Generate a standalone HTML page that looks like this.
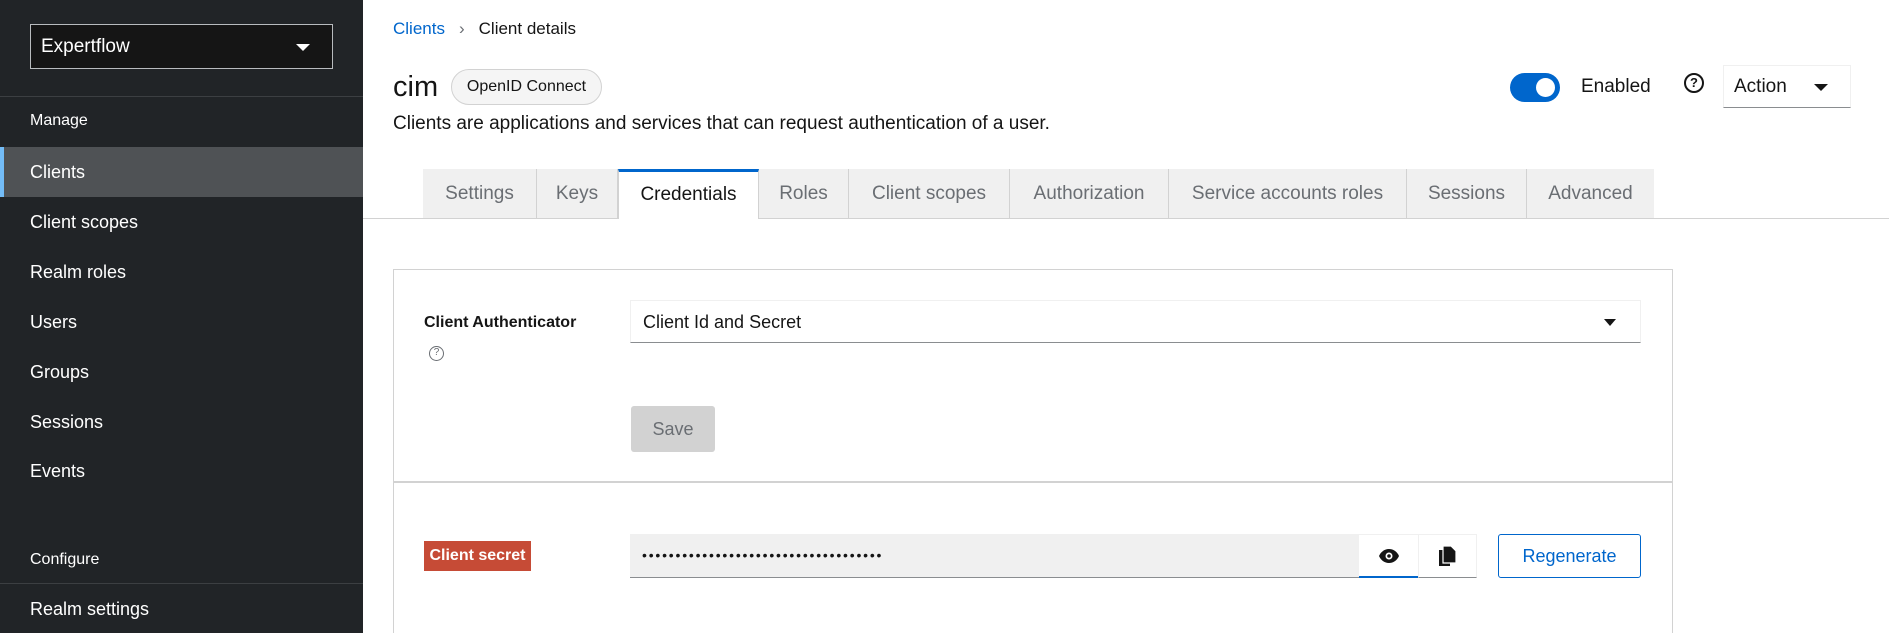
<!DOCTYPE html>
<html style="overflow:hidden"><head><meta charset="utf-8"><style>
*{box-sizing:border-box;margin:0;padding:0}
html,body{width:1889px;height:633px;overflow:hidden}
body{font-family:"Liberation Sans",sans-serif;background:#fff;position:relative;color:#151515}
.a{position:absolute}
#sb{left:0;top:0;width:363px;height:633px;background:#212427}
.nav{position:absolute;left:30px;color:#fff;font-size:18px}
.tab{position:absolute;top:169px;height:49px;background:#f0f0f0;border-right:1px solid #d2d2d2;color:#6a6e73;font-size:19px;text-align:center;line-height:49px}
</style></head><body>
<div id="sb">
 <div class="a" style="left:30px;top:24px;width:303px;height:45px;border:1px solid #b8bbbe;background:#151515;color:#fff;font-size:19px;line-height:43px;padding-left:10px">Expertflow<span class="a" style="right:22px;top:19px;border-left:7px solid transparent;border-right:7px solid transparent;border-top:7px solid #fff"></span></div>
 <div class="a" style="left:0;top:96px;width:363px;height:1px;background:#3c3f42"></div>
 <div class="nav" style="top:112px;font-size:16px">Manage</div>
 <div class="a" style="left:0;top:147px;width:363px;height:50px;background:#4f5255"></div>
 <div class="a" style="left:0;top:147px;width:4px;height:50px;background:#73bcf7"></div>
 <div class="nav" style="top:162px">Clients</div>
 <div class="nav" style="top:212px">Client scopes</div>
 <div class="nav" style="top:262px">Realm roles</div>
 <div class="nav" style="top:312px">Users</div>
 <div class="nav" style="top:362px">Groups</div>
 <div class="nav" style="top:412px">Sessions</div>
 <div class="nav" style="top:461px">Events</div>
 <div class="nav" style="top:551px;font-size:16px">Configure</div>
 <div class="a" style="left:0;top:583px;width:363px;height:1px;background:#3c3f42"></div>
 <div class="nav" style="top:599px">Realm settings</div>
</div>

<div class="a" style="left:393px;top:19px;font-size:17px"><span style="color:#06c">Clients</span><span style="color:#6a6e73;margin:0 14px">›</span>Client details</div>
<div class="a" style="left:393px;top:71px;font-size:29px">cim</div>
<div class="a" style="left:451px;top:69px;width:151px;height:36px;border:1px solid #d2d2d2;border-radius:18px;background:#f5f5f5;font-size:16px;text-align:center;line-height:34px">OpenID Connect</div>
<div class="a" style="left:393px;top:113px;font-size:19px">Clients are applications and services that can request authentication of a user.</div>

<div class="a" style="left:1510px;top:73px;width:50px;height:29px;border-radius:15px;background:#06c"><div class="a" style="right:5px;top:5px;width:19px;height:19px;border-radius:50%;background:#fff"></div></div>
<div class="a" style="left:1581px;top:76px;font-size:19px">Enabled</div>
<div class="a" style="left:1684px;top:73px;width:20px;height:20px;border:2.5px solid #151515;border-radius:50%;font-size:13px;font-weight:bold;text-align:center;line-height:15px">?</div>
<div class="a" style="left:1723px;top:65px;width:128px;height:43px;border:1px solid #f0f0f0;border-bottom:1px solid #8a8d90;font-size:19px;line-height:41px;padding-left:10px">Action<span class="a" style="right:22px;top:18px;border-left:7px solid transparent;border-right:7px solid transparent;border-top:7px solid #151515"></span></div>

<div class="a" style="left:363px;top:218px;width:1526px;height:1px;background:#d2d2d2"></div>
<div class="tab" style="left:423px;width:114px">Settings</div>
<div class="tab" style="left:537px;width:81px">Keys</div>
<div class="tab" style="left:618px;width:141px;background:#fff;color:#151515;border-top:3px solid #06c;height:50px;line-height:45px;border-left:1px solid #d2d2d2">Credentials</div>
<div class="tab" style="left:759px;width:90px">Roles</div>
<div class="tab" style="left:849px;width:161px">Client scopes</div>
<div class="tab" style="left:1010px;width:159px">Authorization</div>
<div class="tab" style="left:1169px;width:238px">Service accounts roles</div>
<div class="tab" style="left:1407px;width:120px">Sessions</div>
<div class="tab" style="left:1527px;width:127px;border-right:none">Advanced</div>

<div class="a" style="left:393px;top:269px;width:1280px;height:380px;border:1px solid #d2d2d2"></div>
<div class="a" style="left:394px;top:481px;width:1278px;height:2px;background:#d2d2d2"></div>
<div class="a" style="left:424px;top:314px;font-size:16px;font-weight:bold">Client Authenticator</div>
<div class="a" style="left:429px;top:346px;width:15px;height:15px;border:1.5px solid #6a6e73;border-radius:50%;font-size:10px;color:#6a6e73;text-align:center;line-height:12px">?</div>
<div class="a" style="left:630px;top:300px;width:1011px;height:43px;border:1px solid #f0f0f0;border-bottom:1px solid #8a8d90;font-size:18px;line-height:42px;padding-left:12px">Client Id and Secret<span class="a" style="right:24px;top:18px;border-left:6px solid transparent;border-right:6px solid transparent;border-top:7px solid #151515"></span></div>
<div class="a" style="left:631px;top:406px;width:84px;height:46px;background:#d2d2d2;border-radius:3px;color:#6a6e73;font-size:18px;text-align:center;line-height:46px">Save</div>

<div class="a" style="left:424px;top:541px;width:107px;height:30px;background:#c64b36;color:#fff;font-weight:bold;font-size:16px;line-height:30px;text-align:center">Client secret</div>
<div class="a" style="left:630px;top:534px;width:729px;height:44px;background:#f0f0f0;border-bottom:1px solid #8a8d90;font-size:14px;line-height:42px;padding-left:12px;letter-spacing:1.8px;white-space:nowrap">••••••••••••••••••••••••••••••••••••</div>
<div class="a" style="left:1359px;top:534px;width:59px;height:44px;border-top:1px solid #f0f0f0;border-bottom:2px solid #06c">
<svg class="a" style="left:20px;top:14px" width="20" height="14" viewBox="0 0 20 14"><path d="M10 0C5 0 1.5 3.5 0 7c1.5 3.5 5 7 10 7s8.5-3.5 10-7C18.5 3.5 15 0 10 0z" fill="#151515"/><circle cx="10" cy="7" r="3.5" fill="#fff"/><circle cx="10" cy="7" r="1.8" fill="#151515"/></svg></div>
<div class="a" style="left:1418px;top:534px;width:59px;height:44px;border:1px solid #f0f0f0;border-bottom:1px solid #8a8d90">
<svg class="a" style="left:20px;top:11px" width="18" height="20" viewBox="0 0 18 20"><rect x="0" y="4" width="11" height="16" fill="#151515"/><path d="M4 0h8l5 5v12H4z" fill="#151515" stroke="#fff" stroke-width="1.2"/></svg></div>
<div class="a" style="left:1498px;top:534px;width:143px;height:44px;border:1px solid #06c;border-radius:3px;color:#06c;font-size:18px;text-align:center;line-height:42px">Regenerate</div>
</body></html>
